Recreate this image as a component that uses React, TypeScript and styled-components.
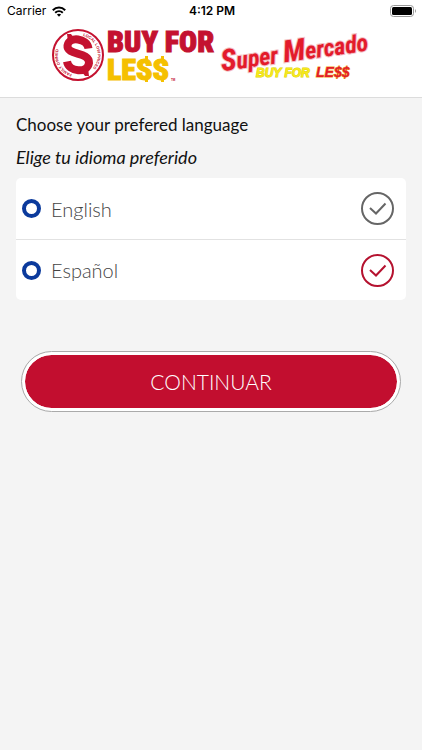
import React, { useState } from "react";
import styled, { createGlobalStyle } from "styled-components";

const GlobalStyle = createGlobalStyle`
  *, *::before, *::after { box-sizing: border-box; }
  body {
    margin: 0;
    background: #f4f4f4;
    color: #111;
    font-family: Lato, "Open Sans", sans-serif;
  }
`;

const Header = styled.header`
  background: #fff;
  border-bottom: 1px solid #dcdcdc;
`;

const StatusBar = styled.div`
  display: grid;
  grid-template-columns: 1fr auto 1fr;
  align-items: center;
  height: 22px;
  padding: 0 5px 0 7px;
  color: #000;
  font: 400 12px/22px Inter, sans-serif;
`;

const Carrier = styled.span`
  display: flex;
  align-items: center;
  gap: 6px;
`;

const Clock = styled.time`
  font-weight: 600;
`;

const Battery = styled.svg`
  justify-self: end;
`;

const Brands = styled.div`
  display: flex;
  justify-content: center;
  gap: 4px;
  height: 75px;
  padding-top: 4px;
`;

const Logo = styled.svg`
  overflow: visible;
`;

const Main = styled.main`
  padding: 16px 16px 0;
`;

const Heading = styled.h1`
  margin: 0;
  font-size: 17px;
  font-weight: 400;
  line-height: 22px;
`;

const Subheading = styled.p`
  margin: 9px 0;
  font-size: 18px;
  font-style: italic;
  font-weight: 400;
  line-height: 24px;
`;

const Options = styled.div`
  overflow: hidden;
  border-radius: 5px;
  background: #fff;
`;

const Option = styled.label`
  display: flex;
  align-items: center;
  gap: 10px;
  height: 61px;
  padding: 0 12px 0 6px;
  color: #444;
  font-size: 20px;
  font-weight: 300;
  line-height: 24px;
  cursor: pointer;

  & + & { border-top: 1px solid #e2e2e2; }
`;

const Ring = styled.span`
  width: 19px;
  height: 19px;
  border: 4px solid #0b3a9c;
  border-radius: 50%;
`;

const OptionName = styled.span`
  flex: 1;
`;

const Mark = styled.span<{ $selected: boolean }>`
  display: grid;
  color: ${(p) => (p.$selected ? "#b5122f" : "#666")};

  & > * { grid-area: 1 / 1; }
  svg { pointer-events: none; }
`;

const Radio = styled.input`
  appearance: none;
  width: 33px;
  height: 33px;
  margin: 0;
  border: 2px solid;
  border-color: inherit;
  border-radius: 50%;
  color: inherit;
  cursor: inherit;
`;

const Continue = styled.button`
  display: block;
  width: calc(100% - 10px);
  height: 61px;
  margin: 51px auto 0;
  padding: 3px;
  border: 1px solid #aaa;
  border-radius: 31px;
  background: #c20e2f content-box;
  box-shadow: inset 0 0 0 3px #fff;
  color: #fff;
  font: 300 21px/53px Lato, sans-serif;
  cursor: pointer;
`;

function BuyForLessLogo() {
  return (
    <Logo width="164" height="58" viewBox="50 26 164 58" role="img" aria-label="Buy For Less">
      <defs>
        <path id="ringTop" d="M82 35.7 A20 20 0 0 1 92 68" />
        <path id="ringBottom" d="M71 74 A20 20 0 0 1 58 48" />
      </defs>
      <circle cx="77" cy="55" r="25" fill="#fff" stroke="#c41230" strokeWidth="2" />
      <path
        d="M87.500 48.500 C86 38 68 36 66.500 45.500 C65.500 56 88.500 51 88 63 C86.500 73.500 68 72.500 66 61.500"
        fill="none"
        stroke="#c41230"
        strokeWidth="8"
      />
      <path d="M66 34 H70 L73 38 L67 42 Z M88 76 H84 L81 72 L87 68 Z" fill="#c41230" />
      <g fill="#c41230" fontFamily="Liberation Sans" fontWeight="700" fontSize="4">
        <text><textPath href="#ringTop">LOCAL LOW PRICES</textPath></text>
        <text><textPath href="#ringBottom">FAMILY OWNED</textPath></text>
      </g>
      <g fontFamily="'Roboto Condensed', 'Liberation Sans Narrow', Roboto, sans-serif" fontWeight="900" strokeWidth="1">
        <text x="106" y="52" fontSize="30" fill="#c41230" stroke="#c41230">BUY FOR</text>
        <text x="106" y="80" fontSize="30" fill="#f5c000" stroke="#f5c000">LESS</text>
      </g>
      <path d="M144 56 h3 v4 h-3z M160 56 h3 v4 h-3z M144 79 h3 v3 h-3z M160 79 h3 v3 h-3z" fill="#f5c000" />
      <text x="170" y="81" fontFamily="Liberation Sans" fontSize="3" fontWeight="700" fill="#c41230">TM</text>
    </Logo>
  );
}

function SuperMercadoLogo() {
  return (
    <Logo width="152" height="58" viewBox="218 26 152 58" role="img" aria-label="Super Mercado Buy For Less">
      <g
        transform="rotate(-8 222 71)"
        fontFamily="'Roboto Condensed', Lato, sans-serif"
        fontStyle="italic"
        fontWeight="700"
        fontSize="24"
        fill="#e31b2b"
        stroke="#f3c0c5"
        strokeWidth="2"
        paintOrder="stroke"
      >
        <text x="221" y="71">
          <tspan fontSize="30">S</tspan>uper <tspan fontSize="30">M</tspan>ercado
        </text>
      </g>
      <g fontFamily="Liberation Sans" fontStyle="italic" fontWeight="700" paintOrder="stroke">
        <text x="255" y="77" fontSize="12" fill="#f6e91b" stroke="#e0d000" strokeWidth="1">BUY FOR</text>
        <text x="315" y="77" fontSize="14" fill="#e31b2b" stroke="#f0a020" strokeWidth="1">LE$$</text>
      </g>
    </Logo>
  );
}

function WifiIcon() {
  return (
    <svg width="14" height="11" viewBox="0 0 14 11" fill="none" stroke="#000" strokeWidth="2" aria-hidden="true">
      <path d="M0.8 4.2 C4.4 .6 9.6 .6 13.2 4.2" />
      <path d="M3.2 6.7 C5.4 4.6 8.6 4.6 10.8 6.7" />
      <path d="M7 10.7 L4.9 8.6 C6.1 7.5 7.9 7.5 9.1 8.6 Z" fill="#000" stroke="none" />
    </svg>
  );
}

const languages = [
  { id: "en", name: "English" },
  { id: "es", name: "Español" },
];

export default function App() {
  const [language, setLanguage] = useState("es");
  return (
    <>
      <GlobalStyle />
      <Header>
        <StatusBar>
          <Carrier>Carrier<WifiIcon /></Carrier>
          <Clock>4:12 PM</Clock>
          <Battery width="27" height="12" viewBox="0 0 27 12" aria-hidden="true">
            <rect x=".5" y=".5" width="23" height="11" rx="3" fill="none" stroke="#999" />
            <rect x="2" y="2" width="20" height="8" rx="1.5" />
            <path d="M25 4 Q27 6 25 8 Z" fill="#999" />
          </Battery>
        </StatusBar>
        <Brands>
          <BuyForLessLogo />
          <SuperMercadoLogo />
        </Brands>
      </Header>
      <Main>
        <Heading>Choose your prefered language</Heading>
        <Subheading lang="es">Elige tu idioma preferido</Subheading>
        <Options role="radiogroup" aria-label="Language">
          {languages.map(({ id, name }) => (
            <Option key={id}>
              <Ring />
              <OptionName>{name}</OptionName>
              <Mark $selected={language === id}>
                <Radio type="radio" name="language" value={id} checked={language === id} onChange={() => setLanguage(id)} />
                <svg width="33" height="33" viewBox="0 0 33 33" fill="none" stroke="currentColor" strokeWidth="2" aria-hidden="true">
                  <path d="M9 16 L15 21.5 L24.5 11.5" />
                </svg>
              </Mark>
            </Option>
          ))}
        </Options>
        <Continue type="button">CONTINUAR</Continue>
      </Main>
    </>
  );
}
